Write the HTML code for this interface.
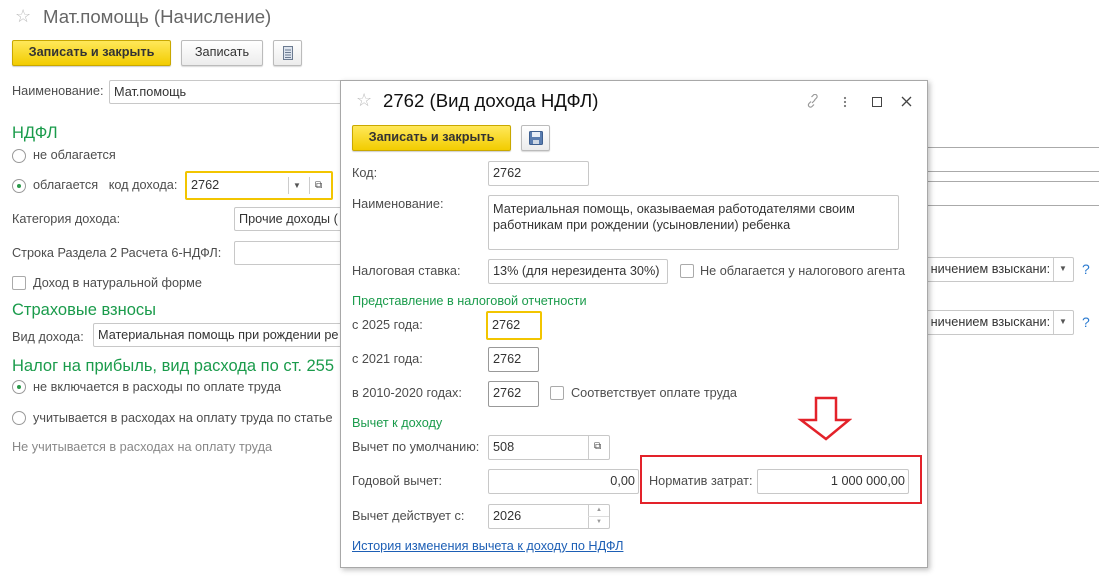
<!DOCTYPE html>
<html><head><meta charset="utf-8">
<style>
*{box-sizing:border-box;margin:0;padding:0}
body{width:1099px;height:585px;background:#fff;font-family:"Liberation Sans",Arial,sans-serif;font-size:12.7px;color:#4d4d4d;position:relative;overflow:hidden}
.a{position:absolute;white-space:nowrap}
.in{position:absolute;border:1px solid #c8c8c8;border-radius:2px;background:#fff;color:#333;padding:0 4px;line-height:22px;white-space:nowrap;overflow:hidden}
.yb{position:absolute;background:linear-gradient(#ffe85a,#f2cc00);border:1px solid #c9a800;border-radius:2px;font-weight:bold;color:#333;text-align:center;line-height:23px;box-shadow:0 1px 1px rgba(0,0,0,.2)}
.wb{position:absolute;background:linear-gradient(#fff,#ececec);border:1px solid #bbb;border-radius:2px;color:#333;text-align:center;line-height:23px;box-shadow:0 1px 1px rgba(0,0,0,.15)}
.g{position:absolute;color:#1a9b4b;white-space:nowrap}
.rad{position:absolute;width:14px;height:14px;border:1px solid #9a9a9a;border-radius:50%;background:#fff}
.rad.on::after{content:"";position:absolute;left:4px;top:4px;width:4px;height:4px;border-radius:50%;background:#2a9a4a}
.cb{position:absolute;width:14px;height:14px;border:1px solid #aaa;border-radius:2px;background:#fff}
.lbl{position:absolute;white-space:nowrap;color:#4d4d4d}
</style></head><body>

<div class="a" style="left:15px;top:6px;font-size:18px;color:#bbb">☆</div>
<div class="a" style="left:43px;top:6px;font-size:18.6px;color:#666">Мат.помощь (Начисление)</div>
<div class="yb" style="left:12px;top:40px;width:159px;height:26px">Записать и закрыть</div>
<div class="wb" style="left:181px;top:40px;width:82px;height:26px">Записать</div>
<div class="wb" style="left:273px;top:40px;width:29px;height:26px"><svg width="10" height="14" style="margin-top:5px"><rect x="0.5" y="0.5" width="9" height="13" fill="#dde4ee" stroke="#6b7a90"/><path d="M2 4h6M2 6.5h6M2 9h6M2 11.5h6" stroke="#6b7a90"/></svg></div>
<div class="lbl" style="left:12px;top:84px">Наименование:</div>
<div class="in" style="left:109px;top:80px;width:420px;height:24px">Мат.помощь</div>
<div class="in" style="left:562px;top:80px;width:62px;height:24px"></div>

<div class="g" style="left:12px;top:124px;font-size:16.5px">НДФЛ</div>
<div class="rad" style="left:12px;top:149px"></div>
<div class="lbl" style="left:33px;top:148px">не облагается</div>
<div class="rad on" style="left:12px;top:179px"></div>
<div class="lbl" style="left:33px;top:178px">облагается&nbsp;&nbsp; код дохода:</div>
<div class="in" style="left:185px;top:171px;width:148px;height:29px;border:2px solid #f2c500;line-height:25px">2762
 <span style="position:absolute;left:101px;top:4px;height:17px;border-left:1px solid #ccc"></span>
 <span style="position:absolute;left:106px;top:0;font-size:8px;color:#555">▼</span>
 <span style="position:absolute;left:122px;top:4px;height:17px;border-left:1px solid #ccc"></span>
 <span style="position:absolute;left:128px;top:0;font-size:10px;color:#444">⧉</span>
</div>
<div class="lbl" style="left:12px;top:212px">Категория дохода:</div>
<div class="in" style="left:234px;top:207px;width:120px;height:24px">Прочие доходы (</div>
<div class="lbl" style="left:12px;top:246px">Строка Раздела 2 Расчета 6-НДФЛ:</div>
<div class="in" style="left:234px;top:241px;width:120px;height:24px"></div>
<div class="cb" style="left:12px;top:276px"></div>
<div class="lbl" style="left:33px;top:276px">Доход в натуральной форме</div>
<div class="g" style="left:12px;top:301px;font-size:16.5px">Страховые взносы</div>
<div class="lbl" style="left:12px;top:330px">Вид дохода:</div>
<div class="in" style="left:93px;top:323px;width:260px;height:24px">Материальная помощь при рождении ре</div>
<div class="g" style="left:12px;top:357px;font-size:16.5px">Налог на прибыль, вид расхода по ст. 255 НК</div>
<div class="rad on" style="left:12px;top:380px"></div>
<div class="lbl" style="left:33px;top:380px">не включается в расходы по оплате труда</div>
<div class="rad" style="left:12px;top:411px"></div>
<div class="lbl" style="left:33px;top:411px">учитывается в расходах на оплату труда по статье</div>
<div class="lbl" style="left:12px;top:440px;color:#888">Не учитывается в расходах на оплату труда</div>

<div class="a" style="left:920px;top:147px;width:190px;height:25px;border:1px solid #aaa;border-right:none"></div>
<div class="a" style="left:920px;top:181px;width:190px;height:25px;border:1px solid #aaa;border-right:none"></div>
<div class="in" style="left:915px;top:257px;width:159px;height:25px">&nbsp;&nbsp;&nbsp;ничением взыскани:<span style="position:absolute;left:137px;top:0;height:23px;border-left:1px solid #ccc"></span><span style="position:absolute;left:143px;top:0;font-size:8px;color:#555">▼</span></div>
<div class="a" style="left:1082px;top:261px;color:#2a7ad0;font-size:14px">?</div>
<div class="in" style="left:915px;top:310px;width:159px;height:25px">&nbsp;&nbsp;&nbsp;ничением взыскани:<span style="position:absolute;left:137px;top:0;height:23px;border-left:1px solid #ccc"></span><span style="position:absolute;left:143px;top:0;font-size:8px;color:#555">▼</span></div>
<div class="a" style="left:1082px;top:314px;color:#2a7ad0;font-size:14px">?</div>

<div class="a" style="left:340px;top:80px;width:588px;height:488px;background:#fff;border:1px solid #a8a8a8;box-shadow:2px 2px 5px rgba(0,0,0,.25)"></div>
<div class="a" style="left:356px;top:90px;font-size:18px;color:#bbb">☆</div>
<div class="a" style="left:383px;top:90px;font-size:18.6px;color:#111">2762 (Вид дохода НДФЛ)</div>
<svg class="a" style="left:805px;top:94px" width="16" height="16"><path d="M7 9l3-3M6 7.5l-2 2a2 2 0 003 3l2-2M9.5 6l2-2a2 2 0 00-3-3l-2 2" fill="none" stroke="#999" stroke-width="1.2"/></svg>
<svg class="a" style="left:843px;top:96px" width="4" height="12"><circle cx="2" cy="2" r="1.1" fill="#777"/><circle cx="2" cy="6" r="1.1" fill="#777"/><circle cx="2" cy="10" r="1.1" fill="#777"/></svg>
<div class="a" style="left:872px;top:97px;width:10px;height:10px;border:1.5px solid #444"></div>
<svg class="a" style="left:901px;top:96px" width="11" height="11"><path d="M1 1l9 9M10 1l-9 9" stroke="#444" stroke-width="1.3"/></svg>
<div class="yb" style="left:352px;top:125px;width:159px;height:26px">Записать и закрыть</div>
<div class="wb" style="left:521px;top:125px;width:29px;height:26px"><svg width="14" height="14" style="margin-top:5px"><rect x="0.5" y="0.5" width="13" height="13" rx="1" fill="#5a7db0" stroke="#3e5f8f"/><rect x="3" y="1" width="8" height="5" fill="#e8eef7"/><rect x="4" y="9" width="6" height="4" fill="#cfd8e4"/></svg></div>

<div class="lbl" style="left:352px;top:166px">Код:</div>
<div class="in" style="left:488px;top:161px;width:101px;height:25px">2762</div>
<div class="lbl" style="left:352px;top:197px">Наименование:</div>
<div class="in" style="left:488px;top:195px;width:411px;height:55px;line-height:16px;padding-top:5px;white-space:normal">Материальная помощь, оказываемая работодателями своим работникам при рождении (усыновлении) ребенка</div>
<div class="lbl" style="left:352px;top:264px">Налоговая ставка:</div>
<div class="in" style="left:488px;top:259px;width:180px;height:25px">13% (для нерезидента 30%)</div>
<div class="cb" style="left:680px;top:264px"></div>
<div class="lbl" style="left:700px;top:264px">Не облагается у налогового агента</div>
<div class="g" style="left:352px;top:294px">Представление в налоговой отчетности</div>
<div class="lbl" style="left:352px;top:318px">с 2025 года:</div>
<div class="in" style="left:486px;top:311px;width:56px;height:29px;border:2px solid #f2c500;line-height:25px;padding-left:4px">2762</div>
<div class="lbl" style="left:352px;top:352px">с 2021 года:</div>
<div class="in" style="left:488px;top:347px;width:51px;height:25px;border-color:#999">2762</div>
<div class="lbl" style="left:352px;top:386px">в 2010-2020 годах:</div>
<div class="in" style="left:488px;top:381px;width:51px;height:26px;border-color:#999">2762</div>
<div class="cb" style="left:550px;top:386px"></div>
<div class="lbl" style="left:571px;top:386px">Соответствует оплате труда</div>
<div class="g" style="left:352px;top:416px">Вычет к доходу</div>
<div class="lbl" style="left:352px;top:440px">Вычет по умолчанию:</div>
<div class="in" style="left:488px;top:435px;width:122px;height:25px">508<span style="position:absolute;left:99px;top:0;height:23px;border-left:1px solid #ccc"></span><span style="position:absolute;left:105px;top:0;font-size:10px;color:#444">⧉</span></div>
<div class="lbl" style="left:352px;top:474px">Годовой вычет:</div>
<div class="in" style="left:488px;top:469px;width:151px;height:25px;text-align:right;padding-right:3px">0,00</div>
<div class="a" style="left:640px;top:455px;width:282px;height:49px;border:2px solid #e3222a"></div>
<div class="lbl" style="left:649px;top:474px">Норматив затрат:</div>
<div class="in" style="left:757px;top:469px;width:152px;height:25px;text-align:right;padding-right:3px">1 000 000,00</div>
<svg class="a" style="left:790px;top:396px" width="62" height="48"><path d="M26 2h20v22h13L36 43 11 24h15z" fill="#fff" stroke="#e3222a" stroke-width="2.5"/></svg>
<div class="lbl" style="left:352px;top:509px">Вычет действует с:</div>
<div class="in" style="left:488px;top:504px;width:122px;height:25px">2026<span style="position:absolute;left:99px;top:0;height:23px;border-left:1px solid #ccc"></span><span style="position:absolute;left:99px;top:11px;width:22px;border-top:1px solid #ddd"></span><span style="position:absolute;left:107px;top:-6px;font-size:6px;color:#999">▲</span><span style="position:absolute;left:107px;top:6px;font-size:6px;color:#999">▼</span></div>
<div class="a" style="left:352px;top:539px;color:#1d5fb5;text-decoration:underline">История изменения вычета к доходу по НДФЛ</div>
</body></html>
